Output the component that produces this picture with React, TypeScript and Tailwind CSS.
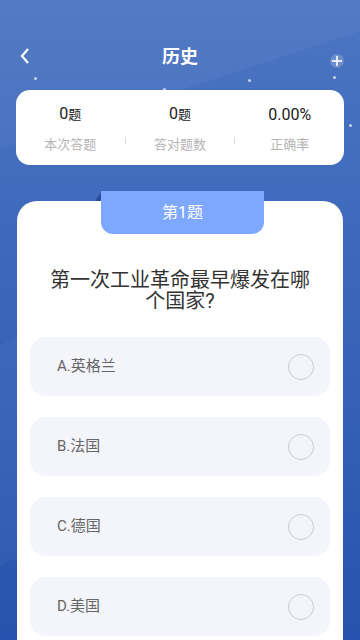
import React from 'react';

const options = ['A.英格兰', 'B.法国', 'C.德国', 'D.美国'];

const stats = [
  { value: '0', unit: '题', label: '本次答题' },
  { value: '0', unit: '题', label: '答对题数' },
  { value: '0.00%', unit: '', label: '正确率' },
];

const dots = [
  { x: 35, y: 78 },
  { x: 249, y: 80 },
  { x: 334, y: 77 },
  { x: 164, y: 89 },
  { x: 350, y: 125 },
];

export default function App() {
  return (
    <div
      className="relative w-[360px] h-[640px] overflow-hidden bg-gradient-to-b from-[#4c75c2] to-[#2753ae]"
      style={{ fontFamily: 'Roboto, "Noto Sans CJK SC", sans-serif' }}
    >
      {/* background bands */}
      <div className="absolute -left-[100px] top-[-60px] w-[600px] h-[140px] bg-white/[0.04] rotate-[-18deg]" />
      <div className="absolute -left-[160px] top-[360px] w-[300px] h-[200px] bg-white/[0.03] rotate-[-25deg]" />

      {dots.map((d, i) => (
        <div
          key={i}
          className="absolute w-[3px] h-[3px] rounded-full bg-[#c8d2e8]"
          style={{ left: d.x - 1, top: d.y - 1 }}
        />
      ))}
      {/* sparkle */}
      <div className="absolute left-[330px] top-[54px] w-[14px] h-[14px] rounded-full bg-white/20">
        <div className="absolute left-[6px] top-[2px] w-[2px] h-[10px] bg-white/80" />
        <div className="absolute left-[2px] top-[6px] w-[10px] h-[2px] bg-white/80" />
      </div>

      <div className="relative flex flex-col">
        {/* Header */}
        <div className="relative h-[56px] mt-[28px] flex items-center justify-center">
          <svg className="absolute left-[19px] top-[19px]" width="12" height="18" viewBox="0 0 12 18">
            <path d="M9 2 L3 9 L9 16" fill="none" stroke="white" strokeWidth="2.2" />
          </svg>
          <h1 className="text-white text-[18px] font-bold">历史</h1>
        </div>

        {/* Stats */}
        <div className="mx-[16px] mt-[6px] h-[75px] bg-white rounded-[14px] flex items-center">
          {stats.map((s, i) => (
            <React.Fragment key={s.label}>
              {i > 0 && <div className="w-px h-[7px] bg-[#dddddd] mt-[26px]" />}
              <div className="flex-1 flex flex-col items-center pt-[2px]">
                <div className="text-[#222] leading-[22px]">
                  <span className="text-[16px]">{s.value}</span>
                  {s.unit && <span className="text-[13px]">{s.unit}</span>}
                </div>
                <div className="text-[13px] text-[#b4b4b4] mt-[10px] leading-[18px]">{s.label}</div>
              </div>
            </React.Fragment>
          ))}
        </div>

        {/* Question card */}
        <div className="relative mx-[17px] mt-[26px]">
          <div className="absolute left-[78px] top-0 w-[170px] h-[10px] bg-[#2a4c9c]" style={{ clipPath: 'polygon(0 100%, 4% 0, 96% 0, 100% 100%)' }} />
          <div className="relative mt-[10px] bg-white rounded-t-[20px] h-[460px] px-[13px]">
            <div className="absolute left-[84px] top-[-10px] w-[163px] h-[43px] bg-[#7ea8fd] rounded-b-[12px] flex items-center justify-center">
              <span className="text-white text-[16px]">第1题</span>
            </div>
            <div className="pt-[69px] flex justify-center">
              <p className="w-[270px] text-center text-[20px] leading-[21px] text-[#333]">第一次工业革命最早爆发在哪个国家?</p>
            </div>
            <div className="mt-[25px] flex flex-col gap-[21px]">
              {options.map((o) => (
                <div key={o} className="h-[59px] bg-[#f4f5fa] rounded-[16px] flex items-center justify-between pl-[27px] pr-[16px]">
                  <span className="text-[15px] text-[#666]">{o}</span>
                  <div className="w-[26px] h-[26px] rounded-full border border-[#cccccc]" />
                </div>
              ))}
            </div>
          </div>
        </div>
      </div>
    </div>
  );
}
